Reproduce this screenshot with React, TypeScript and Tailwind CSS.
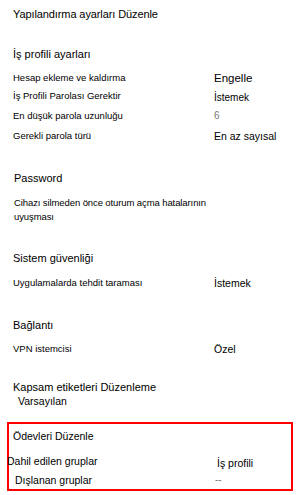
import React from "react";

const Row = ({
  label,
  value,
  className = "",
  valueClass = "text-[10.5px] text-black",
}: {
  label: string;
  value: string;
  className?: string;
  valueClass?: string;
}) => (
  <div className={`flex h-[16px] items-center ${className}`}>
    <div className="w-[214px] shrink-0 pl-[13px] text-[9.5px] leading-[16px] text-black">{label}</div>
    <div className={`leading-[16px] ${valueClass}`}>{value}</div>
  </div>
);

export default function App() {
  return (
    <div
      className="w-[300px] h-[495px] bg-white overflow-hidden text-black"
      style={{ fontFamily: '"Liberation Sans", Arial, sans-serif' }}
    >
      <div className="pt-[6px] pl-[13px] text-[11px] leading-[16px] tracking-[-0.1px]">Yapılandırma ayarları Düzenle</div>

      <div className="mt-[24px] pl-[13px] text-[11px] leading-[16px]">İş profili ayarları</div>

      <Row className="mt-[8px]" label="Hesap ekleme ve kaldırma" value="Engelle" valueClass="text-[11.5px] text-black" />
      <Row className="mt-[2px]" label="İş Profili Parolası Gerektir" value="İstemek" valueClass="text-[10px] pt-[3px] text-black" />
      <Row className="mt-[4px]" label="En düşük parola uzunluğu" value="6" valueClass="text-[10px] text-[#777777]" />
      <Row className="mt-[4px]" label="Gerekli parola türü" value="En az sayısal" />

      <div className="mt-[26px] pl-[14px] text-[11px] leading-[16px]">Password</div>

      <div className="mt-[10px] pl-[14px] w-[235px] text-[9.5px] leading-[14px] tracking-[-0.1px]">
        Cihazı silmeden önce oturum açma hatalarının uyuşması
      </div>

      <div className="mt-[26px] pl-[13px] text-[11px] leading-[16px]">Sistem güvenliği</div>

      <Row className="mt-[9px]" label="Uygulamalarda tehdit taraması" value="İstemek" />

      <div className="mt-[26px] pl-[13px] text-[11px] leading-[16px]">Bağlantı</div>

      <Row className="mt-[8px]" label="VPN istemcisi" value="Özel" />

      <div className="mt-[22px] pl-[13px] text-[11px] leading-[16px]">Kapsam etiketleri Düzenleme</div>
      <div className="pl-[18px] text-[10.5px] leading-[12px]">Varsayılan</div>

      <div className="mt-[15px] ml-[7px] w-[286px] h-[69px] border-2 border-[#ff0000]">
        <div className="mt-[4px] pl-[4px] text-[10.5px] leading-[16px]">Ödevleri Düzenle</div>
        <div className="mt-[9px] flex h-[16px] items-center">
          <div className="w-[210px] shrink-0 -ml-[2px] text-[10.5px] leading-[16px]">Dahil edilen gruplar</div>
          <div className="pt-[3px] text-[10.5px] leading-[16px]">İş profili</div>
        </div>
        <div className="mt-[3px] flex h-[16px] items-center">
          <div className="w-[206px] shrink-0 pl-[6px] text-[10.5px] leading-[16px]">Dışlanan gruplar</div>
          <div className="text-[10px] leading-[16px] text-[#777777]">--</div>
        </div>
      </div>
    </div>
  );
}
